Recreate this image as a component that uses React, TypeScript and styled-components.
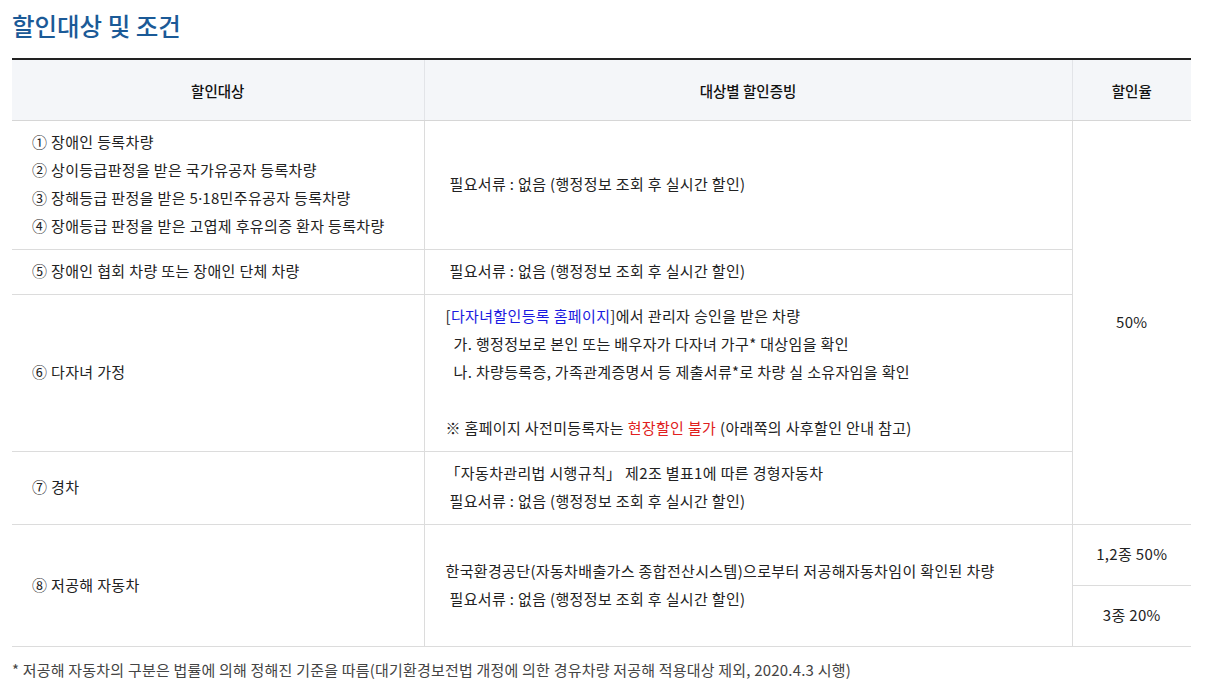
import React from "react";
import styled, { createGlobalStyle } from "styled-components";

const Global = createGlobalStyle`
  html, body { margin: 0; padding: 0; background: #fff; }
  body {
    font-family: "Noto Sans CJK KR", "Noto Sans", sans-serif;
    color: #222;
  }
`;

const Page = styled.div`
  padding: 10px 17px 0 12px;
`;

const Title = styled.h2`
  margin: 0 0 16px;
  font-size: 24.5px;
  line-height: 32px;
  font-weight: 500;
  color: #1b5a97;
`;

const Table = styled.table`
  width: 1179px;
  border-collapse: collapse;
  table-layout: fixed;
  border-top: 2px solid #222;
  font-size: 15px;
  letter-spacing: 0.35px;
`;

const Th = styled.th`
  height: 60px;
  padding: 0;
  background: #f4f6f9;
  font-size: 14.5px;
  font-weight: 500;
  letter-spacing: 0;
  color: #111;
  text-align: center;
  border-bottom: 1px solid #d6d6d6;
  border-left: 1px solid #e2e4e8;
  &:first-child { border-left: none; }
`;

const Td = styled.td<{ $center?: boolean; $first?: boolean }>`
  padding: 7px ${(p) => (p.$first ? "20px" : "21px")} 9px;
  line-height: 28px;
  vertical-align: middle;
  text-align: ${(p) => (p.$center ? "center" : "left")};
  border-bottom: 1px solid #dcdcdc;
  border-left: ${(p) => (p.$first ? "none" : "1px solid #dcdcdc")};
  color: #222;
`;

const Line = styled.div<{ $indent?: number }>`
  padding-left: ${(p) => p.$indent ?? 0}px;
  min-height: 28px;
  white-space: nowrap;
`;

const Dot = styled.span`
  font-family: "Noto Sans", sans-serif;
  letter-spacing: 0;
`;

const LinkText = styled.span`
  color: #1a1ae0;
`;

const Red = styled.span`
  color: #e02020;
`;

const Note = styled.p`
  margin: 13px 0 0;
  font-size: 15px;
  line-height: 20px;
  letter-spacing: 0.2px;
  color: #444;
`;

const Doc = () => <Line $indent={4}>필요서류 : 없음 (행정정보 조회 후 실시간 할인)</Line>;

export default function App() {
  return (
    <>
      <Global />
      <Page>
        <Title>할인대상 및 조건</Title>
        <Table>
          <colgroup>
            <col style={{ width: 412 }} />
            <col style={{ width: 648 }} />
            <col style={{ width: 119 }} />
          </colgroup>
          <thead>
            <tr>
              <Th>할인대상</Th>
              <Th>대상별 할인증빙</Th>
              <Th>할인율</Th>
            </tr>
          </thead>
          <tbody>
            <tr>
              <Td $first>
                <Line>① 장애인 등록차량</Line>
                <Line>② 상이등급판정을 받은 국가유공자 등록차량</Line>
                <Line>③ 장해등급 판정을 받은 5<Dot>·</Dot>18민주유공자 등록차량</Line>
                <Line>④ 장애등급 판정을 받은 고엽제 후유의증 환자 등록차량</Line>
              </Td>
              <Td>
                <Doc />
              </Td>
              <Td $center rowSpan={4}>50%</Td>
            </tr>
            <tr>
              <Td $first>
                <Line>⑤ 장애인 협회 차량 또는 장애인 단체 차량</Line>
              </Td>
              <Td>
                <Doc />
              </Td>
            </tr>
            <tr>
              <Td $first>
                <Line>⑥ 다자녀 가정</Line>
              </Td>
              <Td>
                <Line>
                  [<LinkText>다자녀할인등록 홈페이지</LinkText>]에서 관리자 승인을 받은 차량
                </Line>
                <Line $indent={8}>가. 행정정보로 본인 또는 배우자가 다자녀 가구* 대상임을 확인</Line>
                <Line $indent={8}>나. 차량등록증, 가족관계증명서 등 제출서류*로 차량 실 소유자임을 확인</Line>
                <Line />
                <Line>
                  ※ 홈페이지 사전미등록자는 <Red>현장할인 불가</Red> (아래쪽의 사후할인 안내 참고)
                </Line>
              </Td>
            </tr>
            <tr>
              <Td $first>
                <Line>⑦ 경차</Line>
              </Td>
              <Td>
                <Line>「자동차관리법 시행규칙」 제2조 별표1에 따른 경형자동차</Line>
                <Doc />
              </Td>
            </tr>
            <tr>
              <Td $first rowSpan={2}>
                <Line>⑧ 저공해 자동차</Line>
              </Td>
              <Td rowSpan={2}>
                <Line>한국환경공단(자동차배출가스 종합전산시스템)으로부터 저공해자동차임이 확인된 차량</Line>
                <Doc />
              </Td>
              <Td $center style={{ height: 44 }}>1,2종 50%</Td>
            </tr>
            <tr>
              <Td $center style={{ height: 44 }}>3종 20%</Td>
            </tr>
          </tbody>
        </Table>
        <Note>
          * 저공해 자동차의 구분은 법률에 의해 정해진 기준을 따름(대기환경보전법 개정에 의한 경유차량 저공해 적용대상 제외, 2020.4.3 시행)
        </Note>
      </Page>
    </>
  );
}
